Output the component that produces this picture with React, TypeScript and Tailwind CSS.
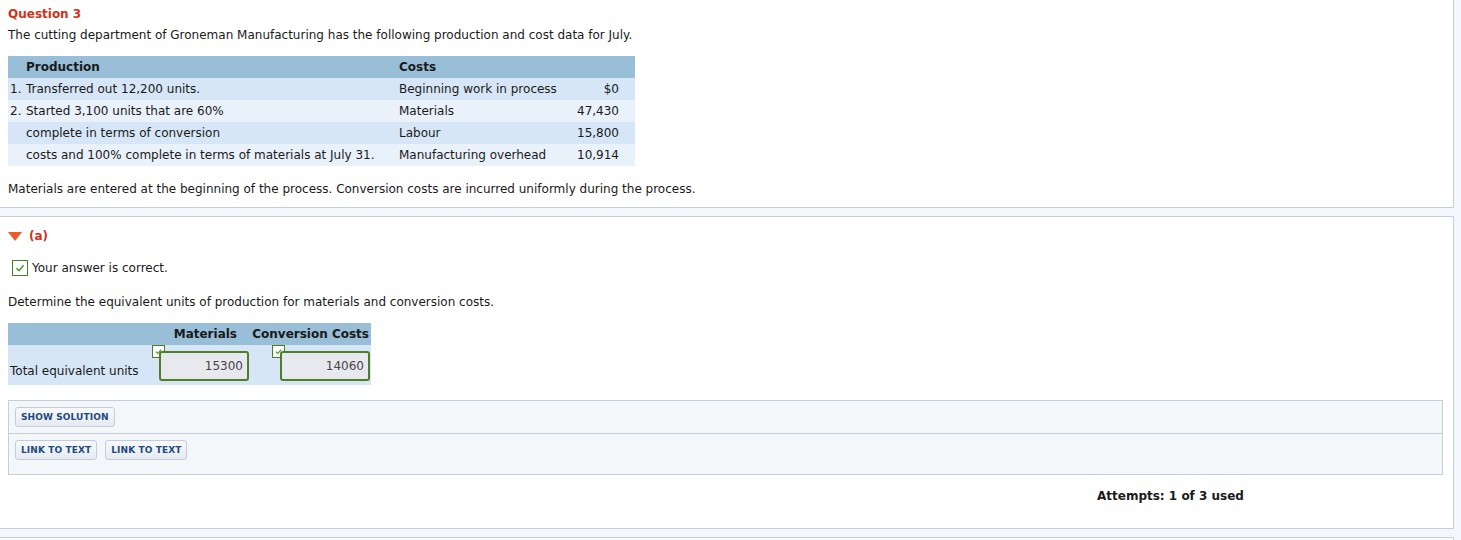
import React from "react";

const Check = ({ size = 14 }: { size?: number }) => (
  <span
    className="inline-flex items-center justify-center border border-[#4a7f24] bg-white"
    style={{ width: size, height: size }}
  >
    <svg width={size - 4} height={size - 4} viewBox="0 0 10 10">
      <path d="M2 5.2 L4.2 7.2 L8 2.8" fill="none" stroke="#4a9a2c" strokeWidth="1.3" />
    </svg>
  </span>
);

const Btn = ({ children }: { children: React.ReactNode }) => (
  <button className="h-[20px] px-[5px] rounded-[3px] border border-[#c3ccd8] bg-gradient-to-b from-[#f7f9fb] to-[#e6ebf1] text-[9px] font-bold text-[#1f4a7e] leading-none tracking-[0.1px]">
    {children}
  </button>
);

export default function App() {
  const rows = [
    { a: "1.", b: "Transferred out 12,200 units.", c: "Beginning work in process", d: "$0", bg: "bg-[#d6e6f6]" },
    { a: "2.", b: "Started 3,100 units that are 60%", c: "Materials", d: "47,430", bg: "bg-[#e9f1fb]" },
    { a: "", b: "complete in terms of conversion", c: "Labour", d: "15,800", bg: "bg-[#d6e6f6]" },
    { a: "", b: "costs and 100% complete in terms of materials at July 31.", c: "Manufacturing overhead", d: "10,914", bg: "bg-[#e9f1fb]" },
  ];
  return (
    <div className="w-[1461px] h-[540px] overflow-hidden bg-[#f3f6fa] text-[12px] text-[#1a1a1a] font-['Verdana','DejaVu_Sans',sans-serif]">
      <div className="w-[1454px] h-[208px] bg-white border-r border-b border-[#c6ced9] pt-[6px] px-[8px]">
        <div className="text-[12px] font-bold text-[#d2301a] leading-[16px]">Question 3</div>
        <div className="mt-[5px] leading-[16px]">
          The cutting department of Groneman Manufacturing has the following production and cost data for July.
        </div>
        <div className="mt-[13px] w-[627px]">
          <div className="flex h-[22px] items-center bg-[#98bed8] font-bold">
            <div className="w-[391px] pl-[18px]">Production</div>
            <div>Costs</div>
          </div>
          {rows.map((r, i) => (
            <div key={i} className={`flex h-[22px] items-center ${r.bg}`}>
              <div className="w-[18px] pl-[2px]">{r.a}</div>
              <div className="w-[373px]">{r.b}</div>
              <div className="w-[160px] whitespace-nowrap">{r.c}</div>
              <div className="w-[60px] text-right">{r.d}</div>
            </div>
          ))}
        </div>
        <div className="mt-[15px] leading-[16px]">
          Materials are entered at the beginning of the process. Conversion costs are incurred uniformly during the process.
        </div>
      </div>
      <div className="mt-[8px] w-[1454px] h-[313px] bg-white border-t border-r border-b border-[#c6ced9] pt-[11px] px-[8px]">
        <div className="flex items-center gap-[7px] h-[16px]">
          <svg width="14" height="9" viewBox="0 0 14 9">
            <path d="M0 0 L14 0 L7 9 Z" fill="#ee5a24" />
          </svg>
          <span className="text-[12px] font-bold text-[#d2301a]">(a)</span>
        </div>
        <div className="mt-[16px] flex items-center gap-[4px] pl-[4px] h-[16px]">
          <Check size={16} />
          <span>Your answer is correct.</span>
        </div>
        <div className="mt-[18px] leading-[16px]">Determine the equivalent units of production for materials and conversion costs.</div>
        <div className="mt-[13px] w-[363px]">
          <div className="flex h-[22px] items-center bg-[#98bed8] font-bold">
            <div className="w-[144px]"></div>
            <div className="w-[85px] text-right">Materials</div>
            <div className="flex-1 text-right pr-[2px] whitespace-nowrap">Conversion Costs</div>
          </div>
          <div className="flex h-[40px] bg-[#d6e6f6]">
            <div className="w-[144px] flex items-end pb-[5px] pl-[2px] whitespace-nowrap">Total equivalent units</div>
            <div className="w-[100px] relative">
              <div className="absolute left-0 top-[-2px]"><Check size={13} /></div>
              <div className="absolute left-[7px] top-[6px] w-[90px] h-[30px] rounded-[3px] border-2 border-[#4e7e26] bg-[#e8e9ee] flex items-center justify-end pr-[4px] text-[12px] text-[#444]">15300</div>
            </div>
            <div className="flex-1 relative">
              <div className="absolute left-[20px] top-[-2px]"><Check size={13} /></div>
              <div className="absolute left-[28px] top-[6px] w-[90px] h-[30px] rounded-[3px] border-2 border-[#4e7e26] bg-[#e8e9ee] flex items-center justify-end pr-[4px] text-[12px] text-[#444]">14060</div>
            </div>
          </div>
        </div>
        <div className="mt-[15px] w-[1435px] border border-[#c6ced9] bg-[#f4f7fa]">
          <div className="h-[33px] flex items-center px-[6px] border-b border-[#c6ced9]">
            <Btn>SHOW SOLUTION</Btn>
          </div>
          <div className="h-[40px] flex items-start pt-[6px] px-[6px] gap-[8px]">
            <Btn>LINK TO TEXT</Btn>
            <Btn>LINK TO TEXT</Btn>
          </div>
        </div>
        <div className="mt-[13px] pl-[1089px] font-bold leading-[16px]">Attempts: 1 of 3 used</div>
      </div>
      <div className="mt-[8px] w-[1454px] h-[20px] bg-white border-t border-r border-[#c6ced9]"></div>
    </div>
  );
}
